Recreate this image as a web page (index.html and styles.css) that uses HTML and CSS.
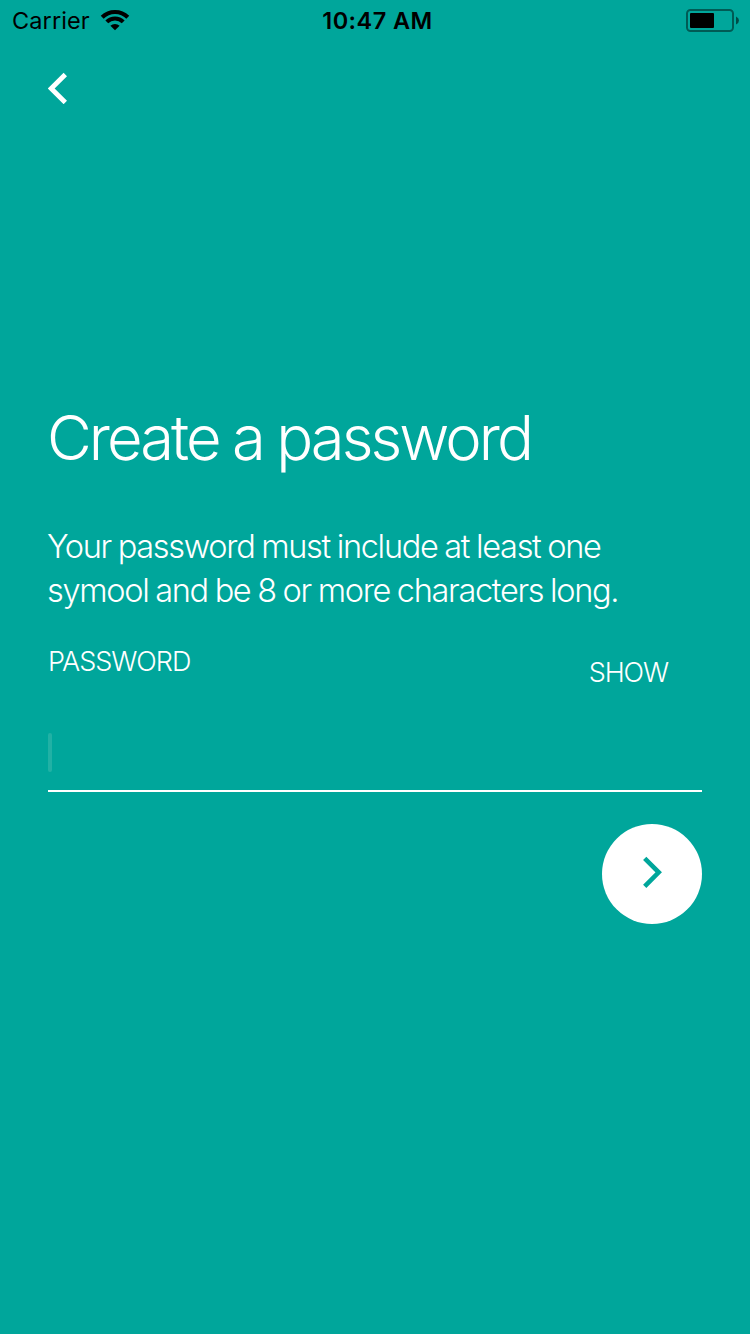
FILE: index.html
```html
<!DOCTYPE html>
<html lang="en">
<head>
<meta charset="utf-8">
<title>Create a password</title>
<link rel="stylesheet" href="styles.css">
</head>
<body>
<div class="screen">
  <header class="status-bar">
    <div class="carrier">
      <span class="carrier-name">Carrier</span>
      <svg class="wifi" width="30" height="22" viewBox="0 0 30 22">
        <g fill="none" stroke="#000" stroke-width="4.1">
          <path d="M2.2 8.3a18 18 0 0 1 25.6 0"/>
          <path d="M6.8 12.9a11.6 11.6 0 0 1 16.4 0"/>
        </g>
        <path d="M15 21.3l-4.6-4.5a6.5 6.5 0 0 1 9.2 0z"/>
      </svg>
    </div>
    <time class="clock">10:47 AM</time>
    <svg class="battery" width="54" height="24" viewBox="0 0 54 24">
      <rect x="1" y="1" width="46" height="21" rx="3.5" fill="none" stroke="#000" stroke-opacity=".45" stroke-width="2"/>
      <rect x="4" y="4" width="24" height="15" rx="1"/>
      <path d="M50 7.5q3 1.3 3 4t-3 4z" fill-opacity=".55"/>
    </svg>
  </header>
  <nav class="nav">
    <button class="back" aria-label="Back">
      <svg width="20" height="32" viewBox="0 0 20 32"><path d="M17.3 2.5L3.2 16.5l14.1 14" fill="none" stroke="#fff" stroke-width="4.8"/></svg>
    </button>
  </nav>
  <main class="content">
    <h1 class="title">Create a password</h1>
    <p class="hint">Your password must include at least one<br>symool and be 8 or more characters long.</p>
    <div class="field">
      <div class="field-head">
        <span class="label">PASSWORD</span>
        <button class="show">SHOW</button>
      </div>
      <div class="input"><i class="caret"></i></div>
    </div>
    <button class="next" aria-label="Next">
      <svg width="20" height="32" viewBox="0 0 20 32"><path d="M2.7 2.3l14 14-14 14" fill="none" stroke="#00a69b" stroke-width="4.6"/></svg>
    </button>
  </main>
</div>
</body>
</html>
```

FILE: styles.css
```css
* { box-sizing: border-box; }

body {
  margin: 0;
  background: #00a69b;
  font-family: Inter, "Liberation Sans", sans-serif;
}

button {
  display: block;
  padding: 0;
  border: 0;
  background: none;
  color: inherit;
  font: inherit;
}

svg { display: block; }

.screen {
  height: 1334px;
  overflow: hidden;
  color: #fff;
}

.status-bar {
  display: grid;
  grid-template-columns: 1fr auto 1fr;
  height: 40px;
  padding: 0 10px 0 12px;
  color: #000;
  font-size: 23.5px;
  line-height: 41px;
}

.carrier { display: flex; gap: 10px; }
.carrier-name { width: 78px; letter-spacing: .1px; white-space: nowrap; }
.wifi { margin-top: 9px; }
.clock { padding-left: 3px; font-weight: 600; letter-spacing: .45px; }
.battery { margin-top: 9px; justify-self: end; }

.nav { padding: 32px 48px 0; }

.content { padding: 296px 48px 0; }

.title {
  margin: 0 0 0 -1px;
  font-size: 61.5px;
  font-weight: 300;
  line-height: 76px;
  letter-spacing: -2.95px;
  word-spacing: -1px;
  white-space: nowrap;
}

.hint {
  margin: 49px 0 0 -1px;
  font-size: 32.5px;
  font-weight: 300;
  line-height: 44px;
  letter-spacing: -1.32px;
  word-spacing: -1px;
  white-space: nowrap;
}

.field {
  margin-top: 32px;
  border-bottom: 2px solid #fff;
}

.field-head {
  display: flex;
  justify-content: space-between;
  padding-right: 34px;
  font-size: 27px;
  font-weight: 300;
  line-height: 34px;
}
.label { letter-spacing: -1px; }
.show { margin-top: 11px; letter-spacing: -1.1px; }

.input { height: 100px; padding-top: 43px; }

.caret {
  display: block;
  width: 4px;
  height: 39px;
  border-radius: 2px;
  background: #21b1a5;
}

.next {
  display: grid;
  place-items: center;
  width: 100px;
  height: 100px;
  margin: 32px 0 0 auto;
  padding-bottom: 4px;
  border-radius: 50%;
  background: #fff;
}
```
